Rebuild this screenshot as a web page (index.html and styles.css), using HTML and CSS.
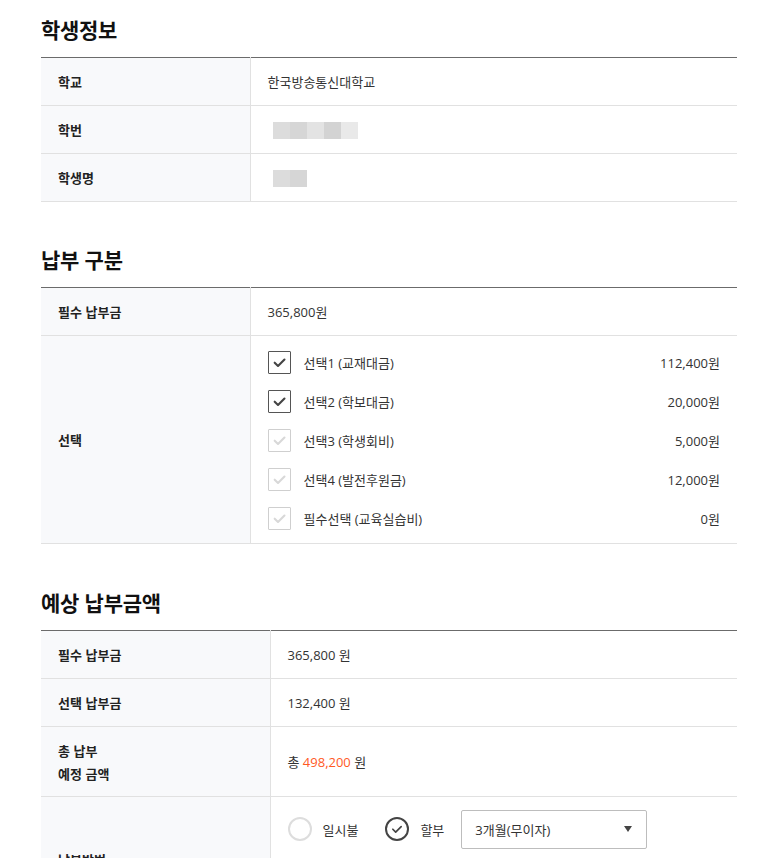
FILE: index.html
```html
<!DOCTYPE html>
<html lang="ko">
<head>
<meta charset="utf-8">
<title>납부 정보</title>
<link rel="stylesheet" href="styles.css">
</head>
<body>
<div class="page">
  <section class="sec">
    <h2 class="sec-title">학생정보</h2>
    <table class="info">
      <tr><th class="lab w1">학교</th><td class="val">한국방송통신대학교</td></tr>
      <tr><th class="lab w1">학번</th><td class="val"><span class="blur blur-id"><i class="b1"></i><i class="b2"></i><i class="b3"></i><i class="b4"></i><i class="b5"></i></span></td></tr>
      <tr><th class="lab w1">학생명</th><td class="val"><span class="blur blur-name"><i class="b1"></i><i class="b2"></i></span></td></tr>
    </table>
  </section>

  <section class="sec sec-2">
    <h2 class="sec-title">납부 구분</h2>
    <table class="info">
      <tr><th class="lab w1">필수 납부금</th><td class="val">365,800원</td></tr>
      <tr>
        <th class="lab w1">선택</th>
        <td class="val opts">
          <ul class="opt-list">
            <li class="opt"><span class="cbox on"><svg viewBox="0 0 24 24"><path d="M6.5 12.2l3.8 3.8 7.4-7.4"/></svg></span><span class="opt-name">선택1 (교재대금)</span><span class="opt-amt">112,400원</span></li>
            <li class="opt"><span class="cbox on"><svg viewBox="0 0 24 24"><path d="M6.5 12.2l3.8 3.8 7.4-7.4"/></svg></span><span class="opt-name">선택2 (학보대금)</span><span class="opt-amt">20,000원</span></li>
            <li class="opt"><span class="cbox off"><svg viewBox="0 0 24 24"><path d="M6.5 12.2l3.8 3.8 7.4-7.4"/></svg></span><span class="opt-name">선택3 (학생회비)</span><span class="opt-amt">5,000원</span></li>
            <li class="opt"><span class="cbox off"><svg viewBox="0 0 24 24"><path d="M6.5 12.2l3.8 3.8 7.4-7.4"/></svg></span><span class="opt-name">선택4 (발전후원금)</span><span class="opt-amt">12,000원</span></li>
            <li class="opt"><span class="cbox off"><svg viewBox="0 0 24 24"><path d="M6.5 12.2l3.8 3.8 7.4-7.4"/></svg></span><span class="opt-name">필수선택 (교육실습비)</span><span class="opt-amt">0원</span></li>
          </ul>
        </td>
      </tr>
    </table>
  </section>

  <section class="sec sec-3">
    <h2 class="sec-title">예상 납부금액</h2>
    <table class="info">
      <tr><th class="lab w2">필수 납부금</th><td class="val">365,800 원</td></tr>
      <tr><th class="lab w2">선택 납부금</th><td class="val">132,400 원</td></tr>
      <tr class="tall"><th class="lab w2 two">총 납부<br>예정 금액</th><td class="val">총 <span class="accent">498,200</span> 원</td></tr>
      <tr class="method">
        <th class="lab w2">납부방법</th>
        <td class="val method-val">
          <div class="pay-row">
            <label class="radio"><span class="rcircle"></span><span>일시불</span></label>
            <label class="radio"><span class="rcircle checked"><svg viewBox="0 0 24 24"><path d="M7 12.3l3.4 3.4 6.6-6.6"/></svg></span><span>할부</span></label>
            <div class="select"><span>3개월(무이자)</span><span class="caret"></span></div>
          </div>
        </td>
      </tr>
    </table>
  </section>
</div>
</body>
</html>
```

FILE: styles.css
```css
* { box-sizing: border-box; }
html, body { margin: 0; padding: 0; background: #fff; }
body {
  font-family: "Open Sans", "Noto Sans CJK KR", sans-serif;
  font-size: 13px;
  color: #333;
}
.page {
  width: 696px;
  margin-left: 41px;
  padding-top: 14px;
}
.sec-title {
  margin: 0 0 12px;
  font-family: "Noto Sans CJK KR", sans-serif;
  font-size: 21px;
  line-height: 31px;
  font-weight: 700;
  color: #111;
  letter-spacing: -0.3px;
}
.sec-2 { margin-top: 42px; }
.sec-3 { margin-top: 43px; }
.info {
  width: 100%;
  border-collapse: collapse;
  border-top: 1px solid #6b6b6b;
}
.info tr { border-bottom: 1px solid #e1e1e1; }
.lab {
  background: #f8f9fb;
  border-right: 1px solid #e1e1e1;
  text-align: left;
  padding: 0 0 0 17px;
  height: 48px;
  font-family: "Noto Sans CJK KR", sans-serif;
  font-size: 13px;
  font-weight: 700;
  color: #222;
  vertical-align: middle;
}
.w1 { width: 209px; }
.w2 { width: 229px; }
.val {
  padding: 0 17px;
  vertical-align: middle;
  height: 48px;
  color: #333;
}
.two { line-height: 23px; height: 70px; }
.accent { color: #ff5a1f; }

/* blurred values */
.blur {
  display: inline-flex;
  padding: 0 0 0 5px;
  vertical-align: middle;
  filter: blur(0.6px);
}
.blur i { display: block; width: 17px; height: 17px; }
.blur .b1 { background: #dcdcdc; }
.blur .b2 { background: #d6d6d6; }
.blur .b3 { background: #e3e3e3; }
.blur .b4 { background: #d3d3d3; }
.blur .b5 { background: #e9e9e9; }

/* options */
.opts { padding-top: 7px; padding-bottom: 5px; }
.opt-list { list-style: none; margin: 0; padding: 0; }
.opt {
  display: flex;
  align-items: center;
  height: 39px;
}
.cbox {
  width: 23px;
  height: 23px;
  border: 1px solid #555;
  border-radius: 1px;
  display: flex;
  align-items: center;
  justify-content: center;
  margin-right: 13px;
  background: #fff;
}
.cbox svg { width: 21px; height: 21px; }
.cbox path { fill: none; stroke-width: 2.4; stroke-linecap: round; stroke-linejoin: round; }
.cbox.on path { stroke: #444; }
.cbox.off { border-color: #cfcfcf; }
.cbox.off path { stroke: #d8d8d8; }
.opt-name { flex: 1; color: #333; }
.opt-amt { color: #333; }

/* payment method */
.method .lab { height: 125px; }
.method-val { vertical-align: top; padding-top: 12px; }
.pay-row { display: flex; align-items: center; height: 40px; }
.radio { display: flex; align-items: center; color: #333; }
.radio:first-child { margin-right: 27px; }
.radio + .radio { margin-right: 17px; }
.rcircle {
  width: 24px;
  height: 24px;
  border: 2px solid #ddd;
  border-radius: 50%;
  margin-right: 11px;
  display: flex;
  align-items: center;
  justify-content: center;
}
.rcircle.checked { border-color: #444; }
.rcircle svg { width: 20px; height: 20px; }
.rcircle path { fill: none; stroke: #444; stroke-width: 2; stroke-linecap: round; stroke-linejoin: round; }
.select {
  width: 186px;
  height: 39px;
  border: 1px solid #bdbdbd;
  border-radius: 2px;
  display: flex;
  align-items: center;
  justify-content: space-between;
  padding: 0 14px 0 13px;
  color: #333;
  background: #fff;
}
.caret {
  width: 0;
  height: 0;
  border-left: 4.5px solid transparent;
  border-right: 4.5px solid transparent;
  border-top: 6px solid #444;
}
```
